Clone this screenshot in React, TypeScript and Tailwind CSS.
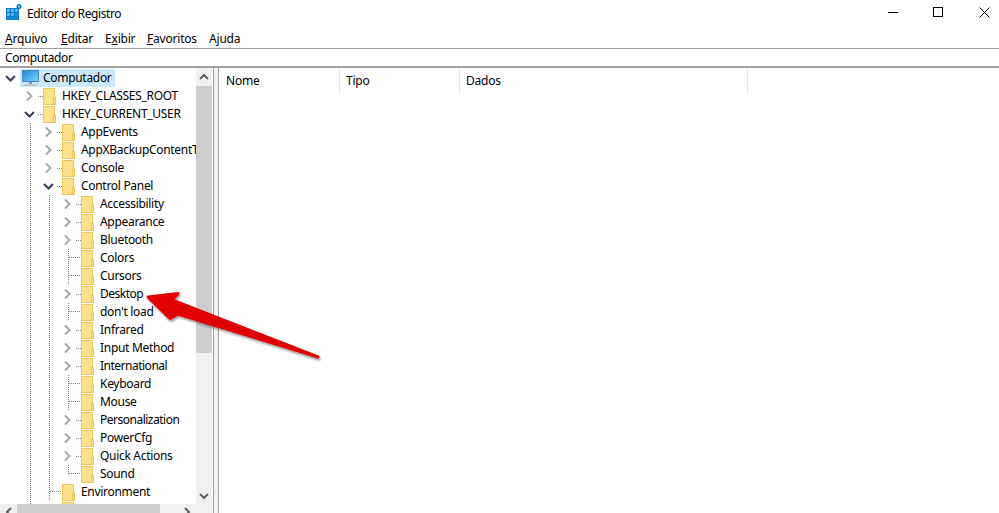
type Row = {
  label: string;
  // number of vertical guide lines to the left of the expander
  guides: number;
  state: "open" | "closed" | "leaf" | "last";
  tight?: boolean;
};

const rows: Row[] = [
  { label: "HKEY_CLASSES_ROOT", guides: 0, state: "closed" },
  { label: "HKEY_CURRENT_USER", guides: 0, state: "open" },
  { label: "AppEvents", guides: 1, state: "closed" },
  { label: "AppXBackupContentType", guides: 1, state: "closed" },
  { label: "Console", guides: 1, state: "closed" },
  { label: "Control Panel", guides: 1, state: "open" },
  { label: "Accessibility", guides: 2, state: "closed" },
  { label: "Appearance", guides: 2, state: "closed" },
  { label: "Bluetooth", guides: 2, state: "closed" },
  { label: "Colors", guides: 2, state: "leaf" },
  { label: "Cursors", guides: 2, state: "leaf" },
  { label: "Desktop", guides: 2, state: "closed", tight: true },
  { label: "don't load", guides: 2, state: "leaf" },
  { label: "Infrared", guides: 2, state: "closed" },
  { label: "Input Method", guides: 2, state: "closed" },
  { label: "International", guides: 2, state: "closed", tight: true },
  { label: "Keyboard", guides: 2, state: "leaf" },
  { label: "Mouse", guides: 2, state: "leaf" },
  { label: "Personalization", guides: 2, state: "closed", tight: true },
  { label: "PowerCfg", guides: 2, state: "closed" },
  { label: "Quick Actions", guides: 2, state: "closed" },
  { label: "Sound", guides: 2, state: "last" },
  { label: "Environment", guides: 1, state: "leaf" },
  { label: "", guides: 1, state: "closed" },
];

const menu = [
  { before: "", key: "A", after: "rquivo", width: "w-[56px]" },
  { before: "", key: "E", after: "ditar", width: "w-[44px]" },
  { before: "E", key: "x", after: "ibir", width: "w-[42px]" },
  { before: "", key: "F", after: "avoritos", width: "w-[62px]" },
  { before: "A", key: "j", after: "uda", width: "w-[40px]" },
];

function Guide() {
  return (
    <svg width="19" height="18" className="shrink-0" shapeRendering="crispEdges">
      <line x1="10.5" y1="0" x2="10.5" y2="18" stroke="#808080" strokeDasharray="1 1" />
    </svg>
  );
}

function Expander({ state }: { state: Row["state"] }) {
  return (
    <svg width="23" height="18" className="shrink-0">
      {state === "leaf" || state === "last" ? (
        <g shapeRendering="crispEdges">
          <line x1="10.5" y1="0" x2="10.5" y2={state === "last" ? 9 : 18} stroke="#808080" strokeDasharray="1 1" />
          <line x1="11" y1="8.5" x2="23" y2="8.5" stroke="#808080" strokeDasharray="1 1" />
        </g>
      ) : (
        <line x1="18" y1="9.5" x2="23" y2="9.5" stroke="#808080" strokeDasharray="1 1" shapeRendering="crispEdges" />
      )}
      {state === "closed" && <path d="M7 4.5 L11.5 9 L7 13.5" fill="none" stroke="#a6a6a6" strokeWidth="2" />}
      {state === "open" && <path d="M5 7 L9.5 11.5 L14 7" fill="none" stroke="#3b3b5a" strokeWidth="2" />}
    </svg>
  );
}

function Folder() {
  return (
    <svg width="14" height="17" className="shrink-0" shapeRendering="crispEdges">
      <rect x="0.5" y="0.5" width="11" height="16" fill="#fde28b" stroke="#ecc659" />
      <rect x="10.5" y="9.5" width="2" height="7" fill="#fde28b" stroke="#ecc659" />
    </svg>
  );
}

function Monitor() {
  return (
    <svg width="17" height="16" className="shrink-0">
      <defs>
        <linearGradient id="screen" x1="0" y1="0" x2="1" y2="1">
          <stop offset="0" stopColor="#1488e0" />
          <stop offset="1" stopColor="#7fd6fb" />
        </linearGradient>
      </defs>
      <rect x="0.5" y="0.5" width="16" height="11" fill="url(#screen)" stroke="#4c88b8" />
      <rect x="7" y="12" width="3" height="2" fill="#8e9aa3" />
      <rect x="1" y="14" width="15" height="2" fill="#c3cbd0" />
    </svg>
  );
}

function AppIcon() {
  return (
    <svg width="16" height="16" className="mb-[4px] shrink-0">
      <rect x="0" y="4" width="13" height="12" fill="#0a79c9" />
      <g fill="#5bb8ee">
        <rect x="1" y="5" width="3" height="3" />
        <rect x="5" y="5" width="3" height="3" />
        <rect x="9" y="5" width="3" height="3" />
        <rect x="1" y="9" width="3" height="3" />
        <rect x="5" y="9" width="3" height="3" />
      </g>
      <g fill="#1f8fdb">
        <rect x="9" y="9" width="3" height="3" />
        <rect x="1" y="13" width="3" height="2" />
        <rect x="5" y="13" width="3" height="2" />
        <rect x="9" y="13" width="3" height="2" />
      </g>
      <circle cx="13" cy="2.5" r="2.5" fill="#0a79c9" />
      <circle cx="13" cy="2.5" r="1" fill="#8fd3f7" />
    </svg>
  );
}

function ScrollChevron({ dir }: { dir: "up" | "down" | "left" | "right" }) {
  const d = {
    up: "M1 6 L5 2 L9 6",
    down: "M1 2 L5 6 L9 2",
    left: "M6 1 L2 5 L6 9",
    right: "M2 1 L6 5 L2 9",
  }[dir];
  const w = dir === "up" || dir === "down" ? 10 : 8;
  const h = dir === "up" || dir === "down" ? 8 : 10;
  return (
    <svg width={w} height={h}>
      <path d={d} fill="none" stroke="#606060" strokeWidth="2" />
    </svg>
  );
}

export default function App() {
  return (
    <div className="relative flex h-[513px] w-[999px] flex-col overflow-hidden bg-white font-['Noto_Sans',sans-serif] text-[12px] leading-none tracking-[-0.2px] text-black">
      {/* Title bar */}
      <header className="flex h-[30px] shrink-0 items-center justify-between pl-[6px]">
        <div className="mb-[2px] flex items-center gap-[5px] tracking-[-0.4px]">
          <AppIcon />
          <span>Editor do Registro</span>
        </div>
        <div className="mb-[6px] flex items-center pr-[9px]">
          <div className="h-px w-[10px] bg-black" />
          <div className="ml-[35px] h-[10px] w-[10px] border border-black" />
          <svg width="11" height="11" className="ml-[36px]">
            <path d="M0.5 0.5 L10.5 10.5 M10.5 0.5 L0.5 10.5" stroke="#000" strokeWidth="1" />
          </svg>
        </div>
      </header>

      {/* Menu */}
      <nav className="flex h-[18px] shrink-0 items-center pl-[5px]">
        {menu.map((m) => (
          <span key={m.after} className={m.width}>
            {m.before}
            <u>{m.key}</u>
            {m.after}
          </span>
        ))}
      </nav>

      {/* Address bar */}
      <div className="flex h-[20px] shrink-0 items-center border-t border-b-2 border-[#a0a0a0] pl-[5px] tracking-[-0.4px]">
        <span className="mt-[1px]">Computador</span>
      </div>

      <main className="flex min-h-0 flex-1">
        {/* Tree pane */}
        <aside className="flex h-full w-[213px] shrink-0">
          <div className="flex w-[196px] shrink-0 flex-col">
            <div className="min-h-0 flex-1 overflow-hidden pl-px pt-px tracking-[-0.3px]">
              <div className="flex h-[18px] items-center">
                <svg width="19" height="18" className="shrink-0">
                  <path d="M5 7 L9.5 11.5 L14 7" fill="none" stroke="#3b3b5a" strokeWidth="2" />
                </svg>
                <div className="flex h-[18px] items-center gap-[4px] bg-[#cce8ff] pl-[2px] pr-[3px]">
                  <Monitor />
                  <span>Computador</span>
                </div>
              </div>
              {rows.map((r, idx) => (
                <div key={idx} className="flex h-[18px] items-center whitespace-nowrap">
                  <div className="w-[19px] shrink-0" />
                  {Array.from({ length: r.guides }).map((_, i) => (
                    <Guide key={i} />
                  ))}
                  <Expander state={r.state} />
                  <Folder />
                  {r.label && (
                    <span className={r.tight ? "ml-[5px] tracking-[-0.5px]" : "ml-[5px]"}>{r.label}</span>
                  )}
                </div>
              ))}
            </div>

            {/* Horizontal scrollbar, cut off by the window edge */}
            <div className="flex h-[9px] shrink-0 items-start overflow-hidden bg-[#f0f0f0]">
              <div className="flex h-[17px] w-[17px] shrink-0 justify-center pt-[3px]">
                <ScrollChevron dir="left" />
              </div>
              <div className="h-[9px] w-[143px] bg-[#cdcdcd]" />
              <div className="flex flex-1 justify-end pr-[5px] pt-[3px]">
                <ScrollChevron dir="right" />
              </div>
            </div>
          </div>

          {/* Vertical scrollbar */}
          <div className="flex w-[16px] shrink-0 flex-col bg-[#f0f0f0]">
            <div className="flex h-[18px] items-center justify-center">
              <ScrollChevron dir="up" />
            </div>
            <div className="h-[267px] bg-[#cdcdcd]" />
            <div className="flex-1" />
            <div className="flex h-[17px] items-center justify-center">
              <ScrollChevron dir="down" />
            </div>
            <div className="h-[9px]" />
          </div>
        </aside>

        {/* Splitter */}
        <div className="h-full w-[6px] shrink-0 border-x border-[#a0a0a0] bg-[#f0f0f0]" />

        {/* Values pane */}
        <section className="flex h-[25px] flex-1 items-center">
          <div className="flex h-full w-[121px] items-center border-r border-[#e5e5e5] pl-[7px] pt-[1px]">Nome</div>
          <div className="flex h-full w-[120px] items-center border-r border-[#e5e5e5] pl-[6px] pt-[1px]">Tipo</div>
          <div className="flex h-full w-[288px] items-center border-r border-[#e5e5e5] pl-[6px] pt-[1px]">Dados</div>
        </section>
      </main>

      {/* Red annotation arrow */}
      <svg width="999" height="513" className="pointer-events-none absolute left-0 top-0">
        <defs>
          <filter id="arrowShadow" x="-10%" y="-10%" width="120%" height="130%">
            <feDropShadow dx="1" dy="2" stdDeviation="1.2" floodColor="#000" floodOpacity="0.4" />
          </filter>
        </defs>
        <path
          d="M148 297 L178 293.5 L172 300 L318 357 L178 314 L170 318.5 Z"
          fill="#e00000"
          stroke="#e00000"
          strokeWidth="3"
          strokeLinejoin="round"
          filter="url(#arrowShadow)"
        />
      </svg>
    </div>
  );
}
